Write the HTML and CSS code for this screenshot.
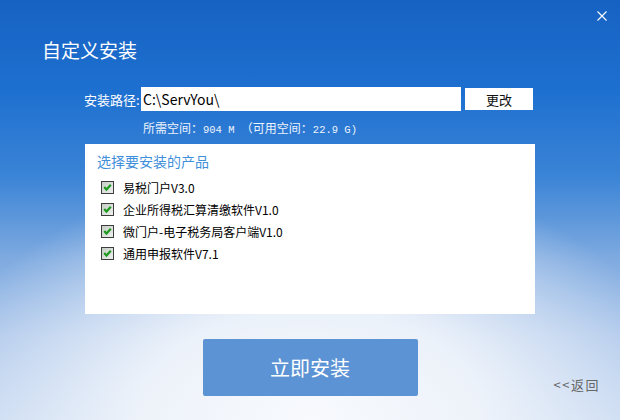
FILE: index.html
```html
<!DOCTYPE html>
<html lang="zh-CN">
<head>
    <meta charset="UTF-8">
    <meta name="viewport" content="width=device-width, initial-scale=1.0">
    <title>自定义安装</title>
    <link rel="stylesheet" href="styles.css">
</head>
<body>
    <div class="ventana">
        <!-- Barra superior con el botón de cerrar -->
        <div class="barra">
            <button class="cerrar" title="关闭">
                <svg width="10" height="10" viewBox="0 0 10 10">
                    <path d="M0.5 0.5 L9.5 9.5 M9.5 0.5 L0.5 9.5" stroke="#fff" stroke-width="1.1" fill="none"/>
                </svg>
            </button>
        </div>

        <div class="titulo">自定义安装</div>

        <!-- Ruta de instalación -->
        <div class="ruta">
            <label class="etiqueta" for="ruta">安装路径:</label>
            <input class="campo" id="ruta" type="text" value="C:\ServYou\">
            <button class="cambiar">更改</button>
        </div>
        <div class="espacio">所需空间：<span class="num">904 M </span>（可用空间：<span class="num">22.9 G)</span></div>

        <!-- Lista de productos -->
        <div class="panel">
            <div class="panel-titulo">选择要安装的产品</div>
            <ul class="productos">
                <li><span class="check"></span>易税门户V3.0</li>
                <li><span class="check"></span>企业所得税汇算清缴软件V1.0</li>
                <li><span class="check"></span>微门户-电子税务局客户端V1.0</li>
                <li><span class="check"></span>通用申报软件V7.1</li>
            </ul>
        </div>

        <div class="pie">
            <button class="instalar">立即安装</button>
            <a class="volver" href="#">&lt;&lt;返回</a>
        </div>
    </div>
</body>
</html>
```

FILE: styles.css
```css
body {
    margin: 0;
    width: 620px;
    height: 420px;
    overflow: hidden;
    font-family: "Noto Sans CJK SC", "Noto Sans", sans-serif;
}

/* Fondo azul que se aclara hacia abajo */
.ventana {
    width: 620px;
    height: 420px;
    background:
        radial-gradient(ellipse 62% 60% at 50% 100%, #f8fafd 0%, rgba(241, 245, 251, 0.92) 45%, rgba(236, 242, 250, 0) 100%),
        linear-gradient(to bottom, #1662c3 0%, #1e70d0 22%, #3b84d6 42%, #80abe0 62%, #aac5ea 80%, #c3d6f0 100%);
}

.barra {
    display: flex;
    justify-content: flex-end;
    padding: 8px 10px 0 0;
}

.cerrar {
    width: 16px;
    height: 16px;
    padding: 0;
    border: none;
    background: none;
    display: flex;
    justify-content: center;
    align-items: center;
    cursor: pointer;
}

.titulo {
    margin: 14px 0 0 42px;
    font-size: 19px;
    line-height: 24px;
    color: #fff;
}

.ruta {
    display: flex;
    align-items: center;
    margin-top: 25px;
    padding-left: 84px;
}

.etiqueta {
    width: 56px;
    margin-right: 1px;
    font-size: 13px;
    color: #fff;
    white-space: nowrap;
}

.campo {
    width: 320px;
    height: 24px;
    box-sizing: border-box;
    border: none;
    padding: 0 2px;
    font-family: "Noto Sans CJK SC", sans-serif;
    font-size: 14px;
    color: #000;
    outline: none;
}

.cambiar {
    width: 68px;
    height: 22px;
    margin-left: 4px;
    border: none;
    background: #fff;
    font-family: "Noto Sans CJK SC", sans-serif;
    font-size: 13px;
    color: #111;
    padding: 0;
}

.espacio {
    margin-top: 9px;
    padding-left: 143px;
    font-size: 12px;
    line-height: 16px;
    color: #eef4fc;
}

.num {
    font-family: "Liberation Mono", monospace;
    font-size: 10.5px;
}

/* Panel blanco con los productos */
.panel {
    width: 450px;
    height: 170px;
    box-sizing: border-box;
    margin: 6px 0 0 85px;
    padding: 8px 12px 0;
    background: #fff;
}

.panel-titulo {
    font-size: 14px;
    line-height: 18px;
    color: #3f8fdb;
}

.productos {
    list-style: none;
    margin: 6px 0 0;
    padding: 0 0 0 4px;
}

.productos li {
    display: flex;
    align-items: center;
    height: 22px;
    font-size: 12px;
    color: #000;
}

.check {
    width: 13px;
    height: 13px;
    box-sizing: border-box;
    margin-right: 9px;
    border: 1px solid #3d3d3d;
    background:
        url("data:image/svg+xml,%3Csvg xmlns='http://www.w3.org/2000/svg' width='11' height='11' viewBox='0 0 11 11'%3E%3Cpath d='M2.2 5 L4.5 7.6 L8.8 2.8' stroke='%231f9a1f' stroke-width='2.2' fill='none'/%3E%3C/svg%3E") center / 11px 11px no-repeat,
        linear-gradient(135deg, #c4cdc4, #eef1ee);
}

.pie {
    display: grid;
    grid-template-columns: 1fr auto 1fr;
    margin-top: 25px;
}

.instalar {
    grid-column: 2;
    width: 215px;
    height: 57px;
    border: none;
    border-radius: 2px;
    background: #5b93d4;
    color: #fff;
    font-family: "Noto Sans CJK SC", sans-serif;
    font-size: 20px;
    cursor: pointer;
}

.volver {
    grid-column: 3;
    justify-self: end;
    align-self: end;
    margin: 0 20px 3px 0;
    font-size: 13px;
    line-height: 16px;
    letter-spacing: 1.5px;
    color: #666;
    text-decoration: none;
}
```
